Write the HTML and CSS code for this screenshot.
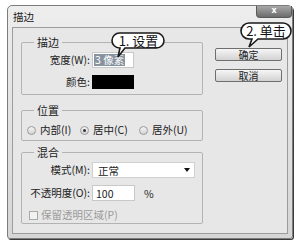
FILE: index.html
```html
<html>
  <head>
    <link rel="stylesheet" href="styles.css">
  </head>
  <body>
    <div class="window">
      <div class="titlebar">
        <span class="title">描边</span>
        <div class="close-btn">x</div>
      </div>

      <div class="panel">
        <div class="groups">
          <fieldset class="group group-stroke">
            <legend>描边</legend>
            <div class="form-grid">
              <label>宽度(W):</label>
              <div class="text-input"><span class="selected">3 像素</span></div>
              <label>颜色:</label>
              <div class="swatch"></div>
            </div>
          </fieldset>

          <fieldset class="group group-position">
            <legend>位置</legend>
            <div class="radio-row">
              <span class="radio-item"><i class="radio"></i>内部(I)</span>
              <span class="radio-item"><i class="radio checked"></i>居中(C)</span>
              <span class="radio-item"><i class="radio"></i>居外(U)</span>
            </div>
          </fieldset>

          <fieldset class="group group-blend">
            <legend>混合</legend>
            <div class="form-grid blend-grid">
              <label>模式(M):</label>
              <div class="select-box"><span>正常</span><i class="arrow"></i></div>
              <label>不透明度(O):</label>
              <div class="opacity-row"><div class="text-input short"><span>100</span></div><span class="pct">%</span></div>
            </div>
            <div class="check-row"><i class="checkbox"></i>保留透明区域(P)</div>
          </fieldset>
        </div>

        <div class="buttons">
          <button class="btn">确定</button>
          <button class="btn">取消</button>
        </div>
      </div>

      <!-- step callouts -->
      <svg class="callout callout-one" width="56" height="27" viewBox="0 0 56 27">
        <path d="M8.5,1 H45.5 A7.5,7.5 0 0 1 45.5,16 H14 L7,25 L9,16 H8.5 A7.5,7.5 0 0 1 8.5,1 Z" />
        <text x="27.5" y="13.5">1. 设置</text>
      </svg>
      <svg class="callout callout-two" width="54" height="27" viewBox="0 0 54 27">
        <path d="M9,1 H43 A8,8 0 0 1 43,17 H18 L9,25 L12,17 H9 A8,8 0 0 1 9,1 Z" />
        <text x="26" y="14">2. 单击</text>
      </svg>
    </div>
  </body>
</html>
```

FILE: styles.css
```css
body {
  margin: 0;
  background: #fff;
  font-family: "Noto Sans CJK SC", "Noto Sans", sans-serif;
  font-size: 10.5px;
  color: #222;
}

.window {
  position: relative;
  box-sizing: border-box;
  width: 286px;
  height: 234px;
  margin: 5px 0 0 7px;
  border: 1px solid #7c7c7c;
  border-radius: 5px 5px 3px 3px;
  background: linear-gradient(#ededed, #d6d6d6);
  box-shadow: 1px 1px 0 #3a3a3a;
  display: flex;
  flex-direction: column;
}

.titlebar {
  height: 21px;
  display: flex;
  justify-content: space-between;
  align-items: center;
}

.title {
  padding-left: 5px;
  line-height: 12px;
}

.close-btn {
  align-self: flex-start;
  width: 36px;
  height: 12px;
  box-sizing: border-box;
  border: 1px solid #5a5a5a;
  border-top: none;
  border-radius: 0 0 4px 4px;
  background: linear-gradient(#a8a8a8, #6c6c6c);
  color: #fff;
  font-family: "DejaVu Sans", sans-serif;
  font-weight: bold;
  font-size: 8px;
  line-height: 10px;
  text-align: center;
}

.panel {
  flex: 1;
  margin: 0 4px 4px;
  border: 1px solid #9c9c9c;
  background: #e7e7e7;
  display: flex;
  padding: 8px 6px 0 8px;
}

.groups {
  width: 182px;
  display: flex;
  flex-direction: column;
}

.group {
  margin: 0;
  border: 1px solid #b3b3b3;
  border-radius: 2px;
  padding: 4px 8px 5px 5px;
  min-inline-size: 0;
}

.group legend {
  margin-left: 7px;
  padding: 0 3px;
  line-height: 12px;
  font-size: 11px;
}

.group-position {
  margin-top: 9px;
  padding-top: 8px;
  padding-bottom: 4px;
}

.group-blend {
  margin-top: 5px;
  padding-bottom: 2px;
}

.form-grid {
  display: grid;
  grid-template-columns: 63px auto;
  column-gap: 2px;
  row-gap: 7px;
  align-items: center;
}

.form-grid label {
  text-align: right;
  line-height: 12px;
}

.text-input {
  box-sizing: border-box;
  width: 42px;
  height: 16px;
  background: #fff;
  border: 1px solid #c8c8c8;
  padding: 1px;
  display: flex;
  align-items: center;
}

.text-input.short {
  width: 43px;
  padding-left: 3px;
}

.selected {
  background: #8893a0;
  color: #fff;
  padding: 0 1px;
  line-height: 12px;
}

.swatch {
  width: 42px;
  height: 14px;
  background: #000;
}

.radio-row {
  display: grid;
  grid-template-columns: 53px 59px auto;
  line-height: 12px;
}

.radio-item {
  display: flex;
  align-items: center;
}

.radio {
  width: 7px;
  height: 7px;
  border: 1px solid #9a9a9a;
  border-radius: 50%;
  background: linear-gradient(#f4f4f4, #d4d4d4);
  margin-right: 4px;
  position: relative;
}

.radio.checked::after {
  content: "";
  position: absolute;
  left: 2px;
  top: 2px;
  width: 3px;
  height: 3px;
  border-radius: 50%;
  background: #333;
}

.blend-grid .select-box {
  box-sizing: border-box;
  width: 103px;
  height: 16px;
  background: #fff;
  border: 1px solid #d0d0d0;
  padding: 0 4px 0 5px;
  display: flex;
  justify-content: space-between;
  align-items: center;
}

.arrow {
  width: 0;
  height: 0;
  border-left: 3px solid transparent;
  border-right: 3px solid transparent;
  border-top: 4px solid #111;
}

.opacity-row {
  display: flex;
  align-items: center;
}

.pct {
  margin-left: 9px;
}

.check-row {
  margin-top: 8px;
  display: flex;
  align-items: center;
  line-height: 12px;
  color: #9a9a9a;
  padding-left: 2px;
}

.checkbox {
  width: 7px;
  height: 7px;
  border: 1px solid #aaa;
  background: #f2f2f2;
  margin-right: 3px;
}

.buttons {
  margin-left: 12px;
  margin-top: 12px;
  display: flex;
  flex-direction: column;
  gap: 8px;
}

.btn {
  box-sizing: border-box;
  width: 67px;
  height: 13px;
  padding: 0;
  border: 1px solid #6e6e6e;
  border-radius: 2px;
  background: linear-gradient(#f6f6f6, #d2d2d2);
  font-family: inherit;
  font-size: 10px;
  line-height: 11px;
  color: #222;
}

.callout {
  position: absolute;
}

.callout path {
  fill: #fff;
  stroke: #1a1a1a;
  stroke-width: 1.6;
}

.callout text {
  font-family: "Noto Sans CJK SC", "Noto Sans", sans-serif;
  font-size: 13px;
  fill: #111;
  text-anchor: middle;
}

.callout-one {
  left: 103px;
  top: 26px;
}

.callout-two {
  left: 232px;
  top: 16px;
}
```
